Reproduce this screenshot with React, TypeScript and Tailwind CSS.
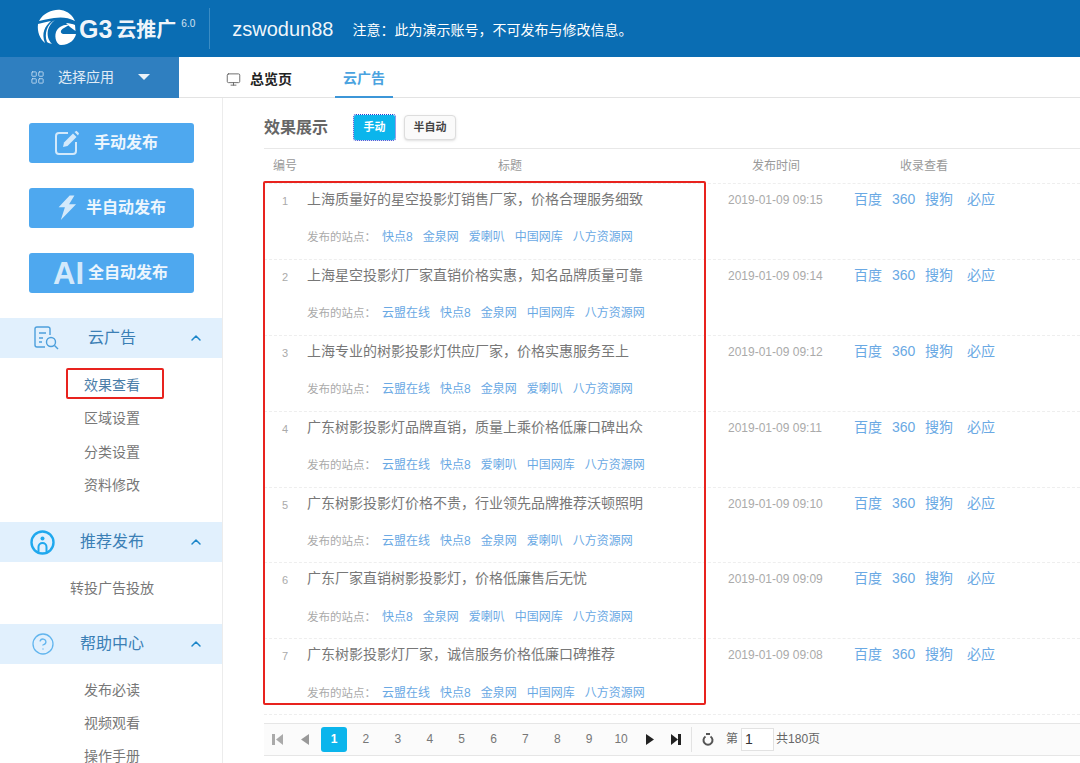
import React from "react";
import { ChevronUp, LayoutGrid, Monitor, CircleHelp } from "lucide-react";

const rows = [
  { n: 1, t: "上海质量好的星空投影灯销售厂家，价格合理服务细致", time: "09:15", s: ["快点8", "金泉网", "爱喇叭", "中国网库", "八方资源网"] },
  { n: 2, t: "上海星空投影灯厂家直销价格实惠，知名品牌质量可靠", time: "09:14", s: ["云盟在线", "快点8", "金泉网", "中国网库", "八方资源网"] },
  { n: 3, t: "上海专业的树影投影灯供应厂家，价格实惠服务至上", time: "09:12", s: ["云盟在线", "快点8", "金泉网", "爱喇叭", "八方资源网"] },
  { n: 4, t: "广东树影投影灯品牌直销，质量上乘价格低廉口碑出众", time: "09:11", s: ["云盟在线", "快点8", "爱喇叭", "中国网库", "八方资源网"] },
  { n: 5, t: "广东树影投影灯价格不贵，行业领先品牌推荐沃顿照明", time: "09:10", s: ["云盟在线", "快点8", "金泉网", "爱喇叭", "八方资源网"] },
  { n: 6, t: "广东厂家直销树影投影灯，价格低廉售后无忧", time: "09:09", s: ["快点8", "金泉网", "爱喇叭", "中国网库", "八方资源网"] },
  { n: 7, t: "广东树影投影灯厂家，诚信服务价格低廉口碑推荐", time: "09:08", s: ["云盟在线", "快点8", "金泉网", "中国网库", "八方资源网"] },
];

function Logo() {
  return (
    <svg width="40" height="40" viewBox="7 2 40 40" className="shrink-0" fill="#fff">
      <path d="M9 15 C14 6 24 3 31 4 C38 5 43 10 45 15 C38 11 30 11 24 12 C18 13 13 14 9 15Z" />
      <path d="M8 18 C12 17 16 16 21 15 C15 20 11 27 15 37 C10 33 7 26 8 18Z" />
      <path d="M25 14 C21 17 19 20 18 24 C17 29 18 34 22 38 C20 37.5 18.500 37 17 36 C14 28 17 18 25 14Z" />
      <path d="M26 26 C28 21 34 18 39 19 L34 22 C30 24 30 27 33 28 L46 28 C45 33 40 39 31 39 C27 39 24 32 26 26Z" />
      <path d="M36 17 C39 17 43 18 45 19 L45.500 25 L40 21Z" />
    </svg>
  );
}

function Section({ icon, label, className, pl }: { icon: React.ReactNode; label: string; className: string; pl: string }) {
  return (
    <div className={`flex items-center h-10 bg-[#e1f0fd] ${className}`}>
      <div className={`w-[79px] flex shrink-0 ${pl}`}>{icon}</div>
      <span className="w-[66px] text-center whitespace-nowrap text-[16px] text-[#3b7fb5]">{label}</span>
      <ChevronUp className="ml-auto w-[16px] h-[16px] mr-[18px] text-[#1b86c9]" strokeWidth={2.2} />
    </div>
  );
}

function Item({ children }: { children: React.ReactNode }) {
  return <div className="h-[33.3px] pl-[2px] flex items-center justify-center text-[14px] text-[#777]">{children}</div>;
}

function BigBtn({ icon, label, mt, gap }: { icon: React.ReactNode; label: string; mt: string; gap: string }) {
  return (
    <div className={`ml-[29px] w-[165px] h-10 rounded-[3px] bg-[#4ea8ef] flex items-center text-white/90 font-bold text-[16px] ${mt} ${gap}`}>
      {icon}
      <span>{label}</span>
    </div>
  );
}

const Tri = ({ dir, color }: { dir: "l" | "r"; color: string }) => (
  <svg width="8" height="11" viewBox="0 0 8 11" fill={color} className="shrink-0">
    <path d={dir === "r" ? "M0 0 L8 5.500 L0 11Z" : "M8 0 L0 5.500 L8 11Z"} />
  </svg>
);

export default function App() {
  return (
    <div className="relative w-[1080px] h-[763px] overflow-hidden bg-white font-['Liberation_Sans','Noto_Sans_CJK_SC',sans-serif]">
      <header className="h-[57px] bg-[#0a6db3] flex items-center text-white">
        <div className="ml-[37px] mb-[1px]"><Logo /></div>
        <span className="ml-[2px] text-[25px] font-bold text-white/95 leading-none mt-[2px]">G3</span>
        <span className="ml-[4px] text-[20px] font-bold text-white/95 leading-none mt-[2px]">云推广</span>
        <span className="self-start mt-[16px] ml-[5px] text-[10px] text-white/80">6.0</span>
        <div className="ml-[14px] w-px h-[41px] bg-[#3a8cc4]" />
        <span className="ml-[22px] text-[20px] leading-none text-white/95">zswodun88</span>
        <span className="ml-[19px] text-[14px] leading-none mt-[2px]">注意：此为演示账号，不可发布与修改信息。</span>
      </header>

      <div className="h-[41px] flex border-b border-[#e3e3e3]">
        <div className="w-[179px] h-[41px] bg-[#2f7fc0] flex items-center text-white/85 text-[14px] pb-[1px]">
          <LayoutGrid className="ml-[30px] w-[15px] h-[15px] text-[#c3dcf1]" strokeWidth={1.4} />
          <span className="ml-[13px]">选择应用</span>
          <span className="ml-[24px] w-0 h-0 border-x-[6px] border-x-transparent border-t-[6px] border-t-white/90" />
        </div>
        <div className="flex items-center">
          <Monitor className="ml-[47px] mt-[5px] w-[15px] h-[15px] text-[#666]" strokeWidth={1.5} />
          <span className="ml-[9px] mt-[5px] text-[14px] font-bold text-[#222] w-[43px] whitespace-nowrap">总览页</span>
          <div className="ml-[42px] w-[58px] h-[41px] pt-[5px] border-b-2 border-[#3c96d8] flex items-center justify-center text-[14px] font-bold text-[#4aa3e0]">云广告</div>
        </div>
      </div>

      <div className="flex">
        <aside className="w-[223px] h-[665px] shrink-0 border-r border-[#ececec] overflow-hidden">
          <BigBtn mt="mt-[25px]" gap="gap-[14px]" label="手动发布" icon={
            <svg width="26" height="26" viewBox="0 0 26 26" fill="none" className="ml-[25px] shrink-0" stroke="#d3e9fb" strokeWidth="2">
              <path d="M14 3 H5 a3 3 0 0 0 -3 3 V21 a3 3 0 0 0 3 3 H19 a3 3 0 0 0 3 -3 V12" />
              <path d="M9 17 L10 12.500 L19 3.500 L22.500 7 L13.500 16Z" fill="#d3e9fb" stroke="none" />
              <path d="M20.500 2 L22.500 0.800 L25 3.300 L24 5.500Z" fill="#d3e9fb" stroke="none" />
            </svg>
          } />
          <BigBtn mt="mt-[25px]" gap="gap-[9px]" label="半自动发布" icon={
            <svg width="20" height="28" viewBox="0 0 21 28" className="ml-[28px] shrink-0" fill="#d3e9fb">
              <path d="M13.300 1 L1.700 13.300 H8.300 L4 26.700 L20 10 H12.700 L18.300 1Z" />
            </svg>
          } />
          <BigBtn mt="mt-[25px]" gap="gap-[4px]" label="全自动发布" icon={<span className="ml-[24px] text-[31px] font-bold leading-none text-[#d3e9fb]">AI</span>} />
          <Section pl="pl-[33px]" className="mt-[25px]" label="云广告" icon={
            <svg width="26" height="24" viewBox="0 0 26 24" fill="none" stroke="#4c9fdc" strokeWidth="1.4"><path d="M17 9V3a2 2 0 0 0-2-2H4a2 2 0 0 0-2 2v16a2 2 0 0 0 2 2h8" /><path d="M6 7h7M6 12h4M6 16h3" /><circle cx="18" cy="16" r="4.500" /><path d="M21.500 19.500L25 23" /></svg>
          } />
          <div className="mt-[11px]">
            <Item><span className="text-[#4a7da8]">效果查看</span></Item>
            <Item>区域设置</Item>
            <Item>分类设置</Item>
            <Item>资料修改</Item>
          </div>
          <Section pl="pl-[30px]" className="mt-[20px]" label="推荐发布" icon={
            <svg width="25" height="25" viewBox="0 0 25 25" fill="none" stroke="#1fa8ee" strokeWidth="2.400"><circle cx="12.500" cy="12.500" r="11" /><circle cx="12.500" cy="8.500" r="2" fill="#1fa8ee" stroke="none" /><path d="M8.500 22v-5a4 4 0 0 1 8 0v5" strokeWidth="2" /></svg>
          } />
          <div className="mt-[10px]"><Item>转投广告投放</Item></div>
          <Section pl="pl-[31px]" className="mt-[19px]" label="帮助中心" icon={<CircleHelp className="w-[24px] h-[24px] text-[#62b5ee]" strokeWidth={1.3} />} />
          <div className="mt-[9px]">
            <Item>发布必读</Item>
            <Item>视频观看</Item>
            <Item>操作手册</Item>
          </div>
        </aside>

        <main className="flex-1 min-w-0 pl-[41px]">
          <div className="h-[51px] flex items-center border-b border-[#e8e8e8] pt-[9px]">
            <span className="text-[16px] font-bold text-[#666] w-[63px] whitespace-nowrap">效果展示</span>
            <span className="ml-[27px] w-[41px] h-[25px] bg-[#0bb5ec] outline-dotted outline-1 outline-[#2a3fd0] rounded-[2px] text-white font-bold text-[11px] flex items-center justify-center">手动</span>
            <span className="ml-[9px] w-[52px] h-[25px] bg-[#fafafa] border border-[#ddd] shadow-sm rounded-[4px] text-[#444] font-bold text-[11px] flex items-center justify-center">半自动</span>
          </div>
          <div className="relative h-[35px] text-[12px] text-[#999] border-b border-dashed border-[#eee] flex items-center">
            <span className="ml-[9px] w-[225px]">编号</span>
            <span className="w-[254px]">标题</span>
            <span className="w-[148px]">发布时间</span>
            <span>收录查看</span>
          </div>
          {rows.map((r) => (
            <div key={r.n} className="h-[75.9px] border-b border-dashed border-[#eee] flex">
              <span className="w-[43px] pl-[18px] pt-[9px] text-[11px] text-[#aaa]">{r.n}</span>
              <div className="w-[421px] pt-[5px]">
                <div className="text-[14px] leading-[21px] text-[#777]">{r.t}</div>
                <div className="mt-[19.400px] flex text-[11.500px] leading-[16px] text-[#aaa]">
                  <span className="w-[75px]">发布的站点：</span>
                  <div className="flex gap-[10px] text-[#6aa9e4]">{r.s.map((x) => <span key={x} className="text-[12px]">{x}</span>)}</div>
                </div>
              </div>
              <span className="w-[126px] pt-[8px] text-[12px] text-[#aaa] leading-[16px]">2019-01-09 {r.time}</span>
              <div className="pt-[5px] flex text-[14px] leading-[21px] text-[#6aa9e4]">
                <span className="w-[38px]">百度</span><span className="w-[33px]">360</span><span className="w-[42px]">搜狗</span><span>必应</span>
              </div>
            </div>
          ))}
          <div className="mt-[7.600px] h-[33px] bg-[#fbfbfb] border-y border-[#e6e6e6] flex items-center text-[12px] text-[#666]">
            <svg width="11" height="11" viewBox="0 0 11 11" fill="#aaa" className="ml-[8px] shrink-0"><rect width="3" height="11" /><path d="M11 0 L4 5.500 L11 11Z" /></svg>
            <span className="ml-[18px]"><Tri dir="l" color="#999" /></span>
            <span className="ml-[12px] w-[26px] h-[25px] bg-[#0bb5ec] rounded-[3px] text-white font-bold flex items-center justify-center">1</span>
            <span className="w-[3px]" />
            {[2, 3, 4, 5, 6, 7, 8, 9, 10].map((p) => (
              <span key={p} className="w-[31.900px] text-center text-[#777]">{p}</span>
            ))}
            <span className="ml-[9px]"><Tri dir="r" color="#222" /></span>
            <svg width="10" height="11" viewBox="0 0 10 11" fill="#222" className="ml-[17px] shrink-0"><path d="M0 0 L7 5.500 L0 11Z" /><rect x="7" width="3" height="11" /></svg>
            <div className="ml-[10px] w-px h-[25px] bg-[#e3e3e3]" />
            <svg width="12" height="13" viewBox="0 0 12 13" fill="none" stroke="#555" strokeWidth="2" className="ml-[10px] shrink-0"><path d="M3.500 3.500 A4.500 4.500 0 1 0 8.500 3.500" /><path d="M4 1 H8" /></svg>
            <span className="ml-[12px]">第</span>
            <span className="ml-[3px] w-[33px] h-[23px] border border-[#e2e2e2] bg-white text-[#333] text-[14px] pl-[3px] leading-[20px]">1</span>
            <span className="ml-[2px]">共180页</span>
          </div>
        </main>
      </div>

      <div className="absolute left-[66px] top-[368px] w-[98px] h-[31px] border-2 border-[#e8231e] rounded-[2px]" />
      <div className="absolute left-[263px] top-[181px] w-[443px] h-[524px] border-2 border-[#e8231e] rounded-[2px]" />
    </div>
  );
}
